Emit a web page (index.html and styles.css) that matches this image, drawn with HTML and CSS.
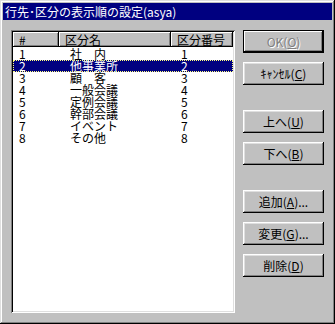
FILE: index.html
```html
<!DOCTYPE html>
<html lang="ja">
<head>
    <meta charset="UTF-8">
    <title>行先･区分の表示順の設定(asya)</title>
    <link rel="stylesheet" href="styles.css">
</head>
<body>
    <div class="window">
        <div class="titlebar">行先･区分の表示順の設定(asya)</div>

        <div class="client">
            <div class="listview">
                <div class="list-header">
                    <div class="col col-no">#</div>
                    <div class="col col-name">区分名</div>
                    <div class="col col-code">区分番号</div>
                </div>
                <div class="list-body">
                    <div class="row"><span class="c1">1</span><span class="c2">社　内</span><span class="c3">1</span></div>
                    <div class="row selected"><span class="c1">2</span><span class="c2">他事業所</span><span class="c3">2</span></div>
                    <div class="row"><span class="c1">3</span><span class="c2">顧　客</span><span class="c3">3</span></div>
                    <div class="row"><span class="c1">4</span><span class="c2">一般会議</span><span class="c3">4</span></div>
                    <div class="row"><span class="c1">5</span><span class="c2">定例会議</span><span class="c3">5</span></div>
                    <div class="row"><span class="c1">6</span><span class="c2">幹部会議</span><span class="c3">6</span></div>
                    <div class="row"><span class="c1">7</span><span class="c2">イベント</span><span class="c3">7</span></div>
                    <div class="row"><span class="c1">8</span><span class="c2">その他</span><span class="c3">8</span></div>
                </div>
            </div>

            <div class="buttons">
                <div class="btn-group">
                    <button class="btn default" disabled>OK(<u>O</u>)</button>
                    <button class="btn">ｷｬﾝｾﾙ(<u>C</u>)</button>
                </div>
                <div class="btn-group">
                    <button class="btn">上へ(<u>U</u>)</button>
                    <button class="btn">下へ(<u>B</u>)</button>
                </div>
                <div class="btn-group">
                    <button class="btn">追加(<u>A</u>)...</button>
                    <button class="btn">変更(<u>G</u>)...</button>
                    <button class="btn">削除(<u>D</u>)</button>
                </div>
            </div>
        </div>
    </div>
</body>
</html>
```

FILE: styles.css
```css
body {
    margin: 0;
    font-family: "Noto Sans CJK JP", "DejaVu Sans", sans-serif;
    font-size: 12px;
    background: #c0c0c0;
}
.window {
    width: 335px;
    height: 324px;
    box-sizing: border-box;
    padding: 3px;
    background: #c0c0c0;
    box-shadow: inset -1px -1px #000, inset 1px 1px #dfdfdf, inset -2px -2px #808080, inset 2px 2px #fff;
    display: flex;
    flex-direction: column;
}
.titlebar {
    height: 17px;
    line-height: 17px;
    background: #000080;
    color: #fff;
    padding-left: 2px;
    white-space: nowrap;
    overflow: hidden;
}
.client {
    flex: 1;
    display: flex;
    gap: 8px;
    padding: 10px 8px 8px 8px;
}
.listview {
    width: 224px;
    box-sizing: border-box;
    padding: 2px;
    background: #fff;
    box-shadow: inset 1px 1px #808080, inset -1px -1px #fff, inset 2px 2px #000, inset -2px -2px #dfdfdf;
    display: flex;
    flex-direction: column;
}
.list-header {
    display: flex;
    height: 15px;
}
.col {
    box-sizing: border-box;
    background: #c0c0c0;
    line-height: 15px;
    padding-left: 6px;
    box-shadow: inset -1px -1px #000, inset 1px 1px #fff, inset -2px -2px #808080;
    white-space: nowrap;
}
.col-no { width: 46px; }
.col-name { width: 112px; }
.col-code { flex: 1; }
.list-body {
    padding-top: 1px;
}
.row {
    display: flex;
    height: 12px;
    line-height: 12px;
    box-sizing: border-box;
    color: #000;
    white-space: nowrap;
}
.row .c1 { width: 46px; padding-left: 6px; box-sizing: border-box; }
.row .c2 { width: 112px; padding-left: 11px; box-sizing: border-box; }
.row .c3 { flex: 1; padding-left: 10px; }
.row.selected {
    background: #000080;
    color: #fff;
    outline: 1px dotted #ffff80;
    outline-offset: -1px;
}
.buttons {
    display: flex;
    flex-direction: column;
    gap: 25px;
}
.btn-group {
    display: flex;
    flex-direction: column;
    gap: 9px;
}
.btn {
    width: 81px;
    height: 23px;
    margin: 0;
    padding: 0;
    border: none;
    background: #c0c0c0;
    font-family: "Noto Sans CJK JP", "DejaVu Sans", sans-serif;
    font-size: 12px;
    color: #000;
    box-shadow: inset -1px -1px #000, inset 1px 1px #fff, inset -2px -2px #808080, inset 2px 2px #dfdfdf;
}
.btn.default {
    box-shadow: inset 0 0 0 1px #000, inset -2px -2px #000, inset 2px 2px #fff, inset -3px -3px #808080;
}
.btn:disabled {
    color: #808080;
    text-shadow: 1px 1px #fff;
}
```
